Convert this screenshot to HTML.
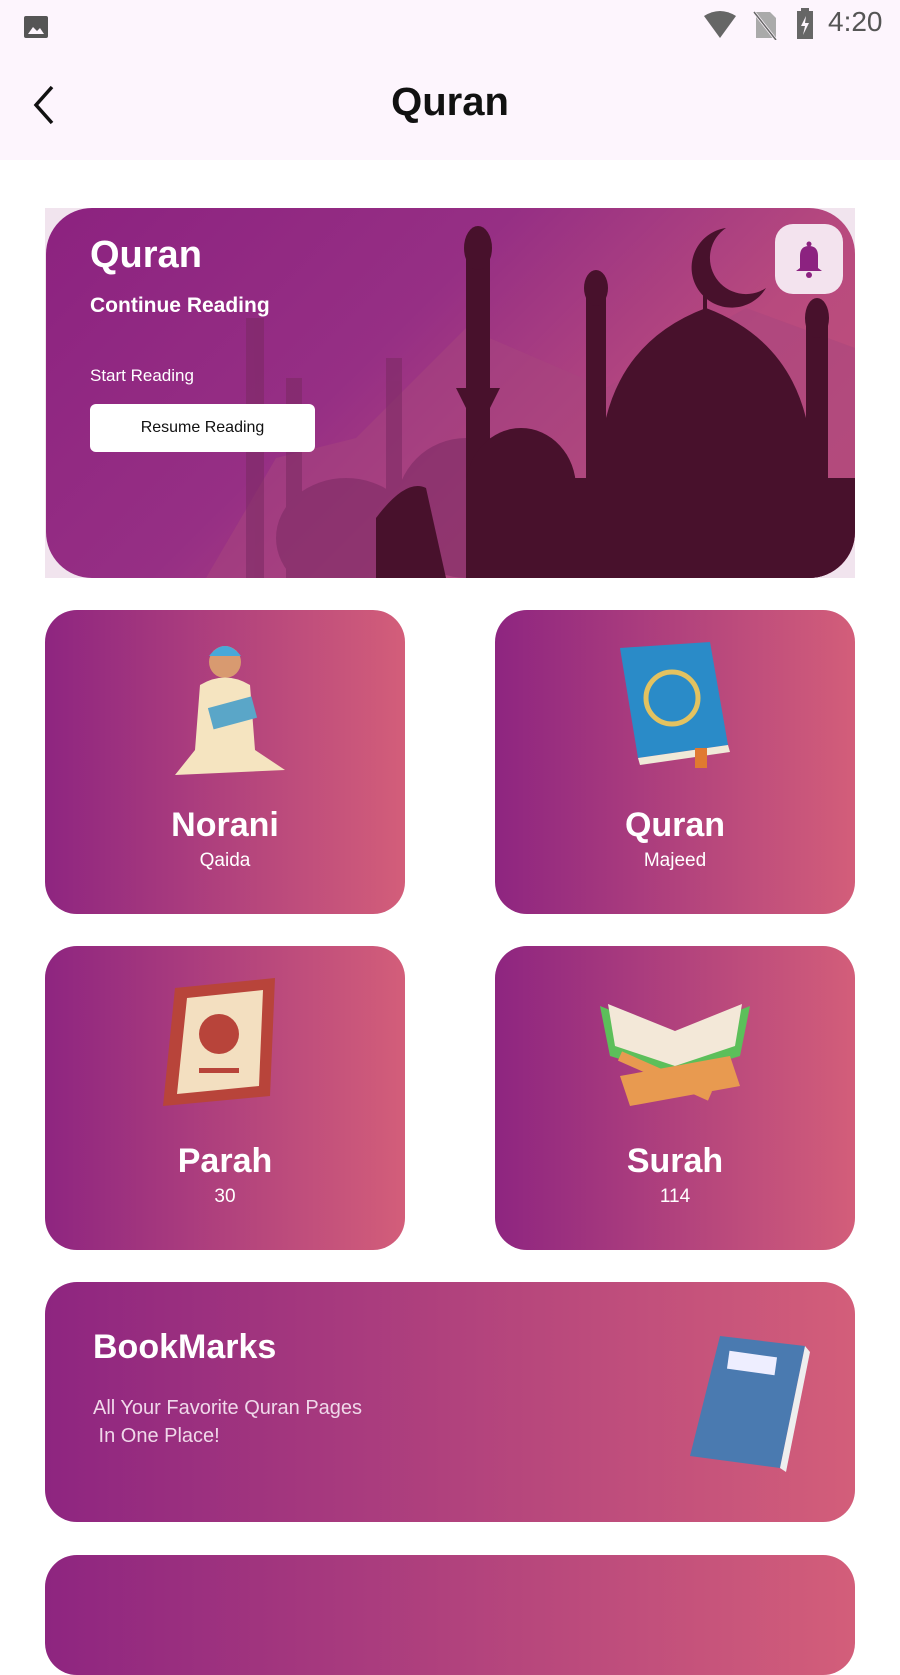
<!DOCTYPE html>
<html><head><meta charset="utf-8"><style>
*{margin:0;padding:0;box-sizing:border-box}
body{width:900px;height:1600px;overflow:hidden;background:#fff;font-family:"Liberation Sans",sans-serif;position:relative}
.top{position:absolute;left:0;top:0;width:900px;height:160px;background:#fdf5fd}
.card{position:absolute;border-radius:32px;background:linear-gradient(90deg,#8e2580,#d35e7a);color:#fff;text-align:center;overflow:hidden}
.card .t{position:absolute;left:0;right:0;top:196px;font-size:34px;font-weight:bold}
.card .s{position:absolute;left:0;right:0;top:240px;font-size:19px}
</style></head><body>
<div class="top"></div>
<svg style="position:absolute;left:22px;top:14px" width="30" height="26" viewBox="0 0 30 26"><rect x="2" y="2" width="24" height="22" rx="2" fill="#555"/><path d="M6 20 L11 13 L15 17 L18 14 L22 20Z" fill="#fdf5fd"/></svg>
<svg style="position:absolute;left:702px;top:10px" width="36" height="30" viewBox="0 0 36 30"><path d="M2 6 Q18 -4 34 6 L18 28Z" fill="#666"/></svg>
<svg style="position:absolute;left:752px;top:10px" width="26" height="30" viewBox="0 0 26 30"><path d="M4 2 H18 L24 8 V28 H4Z" fill="#aaa"/><path d="M2 2 L24 30" stroke="#fdf5fd" stroke-width="3"/><path d="M2 2 L24 30" stroke="#666" stroke-width="1.5"/></svg>
<svg style="position:absolute;left:795px;top:8px" width="20" height="32" viewBox="0 0 20 32"><rect x="6" y="0" width="8" height="4" fill="#666"/><rect x="2" y="3" width="16" height="28" fill="#666"/><path d="M11 8 L6 18 H10 L8 27 L14 15 H10Z" fill="#fdf5fd"/></svg>
<div style="position:absolute;left:828px;top:6px;font-size:28px;color:#555">4:20</div>
<svg style="position:absolute;left:28px;top:84px" width="30" height="42" viewBox="0 0 30 42"><path d="M24 3 L8 21 L24 39" stroke="#111" stroke-width="3.5" fill="none"/></svg>
<div style="position:absolute;left:0;width:900px;top:80px;text-align:center;font-size:40px;font-weight:bold;color:#111">Quran</div>

<div style="position:absolute;left:45px;top:208px;width:810px;height:370px;background:#f1e4ee"></div>
<div style="position:absolute;left:46px;top:208px;width:809px;height:370px;border-radius:46px;overflow:hidden;background:linear-gradient(135deg,#8c2280 0%,#962f84 40%,#b84a7e 70%,#c2527a 100%)">
<svg width="809" height="370" viewBox="0 0 809 370" style="position:absolute;left:0;top:0">
<path d="M160 370 L230 250 L310 230 L420 120 L560 180 L700 100 L809 140 V370Z" fill="#a8467d" opacity=".5"/>
<g fill="#7a2a62" opacity=".55"><rect x="200" y="110" width="18" height="260"/><rect x="240" y="170" width="16" height="200"/><rect x="340" y="150" width="16" height="220"/><ellipse cx="300" cy="330" rx="70" ry="60"/><ellipse cx="420" cy="300" rx="70" ry="70"/></g>
<g fill="#48112c">
<rect x="420" y="40" width="24" height="330"/><ellipse cx="432" cy="40" rx="14" ry="22"/><path d="M410 180 H454 L444 200 H420Z"/>
<rect x="540" y="80" width="20" height="290"/><ellipse cx="550" cy="80" rx="12" ry="18"/>
<rect x="760" y="110" width="22" height="260"/><ellipse cx="771" cy="110" rx="12" ry="20"/>
<path d="M560 370 V210 Q580 130 660 100 Q740 130 760 210 V370Z"/>
<ellipse cx="475" cy="280" rx="55" ry="60"/><rect x="420" y="270" width="389" height="100"/>
<path d="M330 370 V310 Q360 270 380 280 L400 370Z"/>
<rect x="657" y="60" width="4" height="50"/>
<path d="M680 20 A40 40 0 1 0 720 80 A32 32 0 1 1 680 20Z"/>
</g>
</svg>
<div style="position:absolute;left:44px;top:26px;font-size:38px;font-weight:bold;color:#fff">Quran</div>
<div style="position:absolute;left:44px;top:86px;font-size:21px;font-weight:bold;color:#fff">Continue Reading</div>
<div style="position:absolute;left:44px;top:158px;font-size:17px;color:#fff">Start Reading</div>
<div style="position:absolute;left:44px;top:196px;width:225px;height:48px;background:#fff;border-radius:6px;color:#111;font-size:16px;text-align:center;line-height:48px">Resume Reading</div>
<div style="position:absolute;left:729px;top:16px;width:68px;height:70px;border-radius:18px;background:#f3e3ee"></div>
<svg style="position:absolute;left:746px;top:32px" width="34" height="40" viewBox="0 0 34 40"><circle cx="17" cy="4" r="2.5" fill="#8c2280"/><path d="M8 28 V16 Q8 6 17 6 Q26 6 26 16 V28 L30 31 H4Z" fill="#8c2280"/><circle cx="17" cy="35" r="3" fill="#8c2280"/></svg>
</div>

<div class="card" style="left:45px;top:610px;width:360px;height:304px">
<svg style="position:absolute;left:100px;top:20px" width="160" height="160" viewBox="0 0 160 160"><circle cx="80" cy="32" r="16" fill="#d89a70"/><path d="M64 26 Q80 6 96 26Z" fill="#48a8d8"/><path d="M55 55 Q80 40 105 55 L110 120 L140 140 L30 145 L50 120Z" fill="#f5e4c0"/><rect x="65" y="72" width="45" height="22" fill="#5aa6c8" transform="rotate(-15 87 83)"/></svg>
<div class="t">Norani</div><div class="s">Qaida</div></div>
<div class="card" style="left:495px;top:610px;width:360px;height:304px">
<svg style="position:absolute;left:115px;top:30px" width="130" height="140" viewBox="0 0 130 140"><path d="M10 8 L100 2 L118 105 L28 118Z" fill="#2a8bc8"/><path d="M28 118 L118 105 L120 112 L30 125Z" fill="#f0ead8"/><circle cx="62" cy="58" r="26" fill="none" stroke="#e3c260" stroke-width="5"/><rect x="85" y="108" width="12" height="20" fill="#e07a30"/></svg>
<div class="t">Quran</div><div class="s">Majeed</div></div>
<div class="card" style="left:45px;top:946px;width:360px;height:304px">
<svg style="position:absolute;left:110px;top:30px" width="140" height="140" viewBox="0 0 140 140"><path d="M20 12 L120 2 L115 120 L8 130Z" fill="#b8443a"/><path d="M32 22 L108 14 L104 110 L22 118Z" fill="#f3dfc0"/><circle cx="64" cy="58" r="20" fill="#b8443a"/><rect x="44" y="92" width="40" height="5" fill="#b8443a"/></svg>
<div class="t">Parah</div><div class="s">30</div></div>
<div class="card" style="left:495px;top:946px;width:360px;height:304px">
<svg style="position:absolute;left:95px;top:40px" width="170" height="130" viewBox="0 0 170 130"><path d="M10 20 L85 50 L160 20 L150 70 L85 90 L20 70Z" fill="#5cbf5a"/><path d="M18 18 L85 45 L152 18 L145 60 L85 80 L25 60Z" fill="#f3e8d8"/><path d="M30 90 L140 70 L150 100 L40 120Z" fill="#e89a50"/><path d="M30 70 L120 110" stroke="#e89a50" stroke-width="10"/></svg>
<div class="t">Surah</div><div class="s">114</div></div>

<div class="card" style="left:45px;top:1282px;width:810px;height:240px;text-align:left">
<div style="position:absolute;left:48px;top:46px;font-size:34px;font-weight:bold">BookMarks</div>
<div style="position:absolute;left:48px;top:112px;font-size:20px;line-height:28px;color:#f0d8ea">All Your Favorite Quran Pages<br>&nbsp;In One Place!</div>
<svg style="position:absolute;left:635px;top:50px" width="140" height="150" viewBox="0 0 140 150"><path d="M40 4 L125 14 L100 136 L10 124Z" fill="#4a7ab0"/><path d="M125 14 L130 20 L106 140 L100 136Z" fill="#eee"/><rect x="48" y="22" width="48" height="18" fill="#eef" transform="rotate(8 72 31)"/></svg>
</div>
<div class="card" style="left:45px;top:1555px;width:810px;height:120px"></div>
</body></html>
